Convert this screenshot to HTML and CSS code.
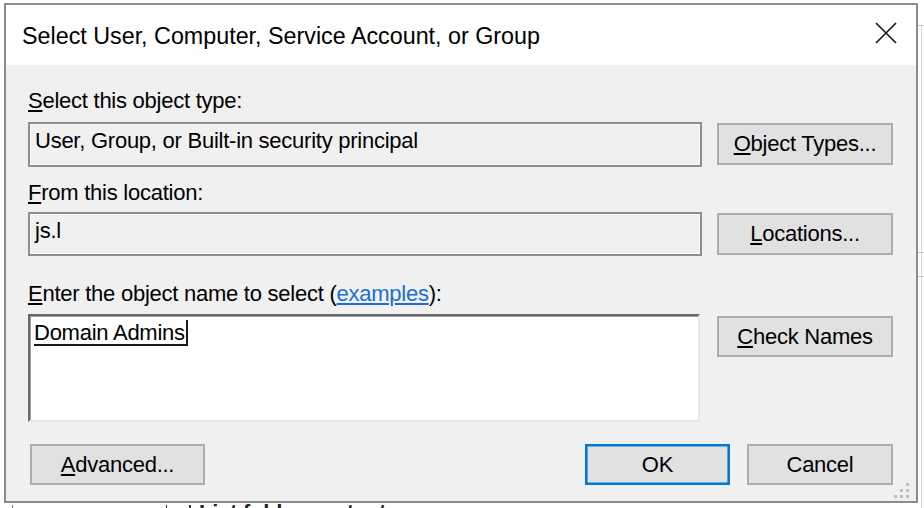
FILE: index.html
```html
<!DOCTYPE html>
<html>
<head>
<meta charset="utf-8">
<link rel="stylesheet" href="styles.css">
</head>
<body>
<div class="backdrop">
  <div class="bd-vline"></div>
  <div class="bd-h1"></div>
  <div class="bd-h2"></div>
  <div class="bd-h3"></div>
  <div class="bd-left"></div>
  <div class="bd-check"></div>
  <div class="bd-text">List folder contents</div>
</div>
<div class="dialog">
  <div class="titlebar">
    <span class="title">Select User, Computer, Service Account, or Group</span>
    <svg class="close" width="22" height="22" viewBox="0 0 22 22"><path d="M1 1 L21 21 M21 1 L1 21" stroke="#1a1a1a" stroke-width="1.7" fill="none"/></svg>
  </div>
  <div class="content">
    <div class="label l1"><u>S</u>elect this object type:</div>
    <div class="row">
      <div class="field f1">User, Group, or Built-in security principal</div>
      <button class="btn b1"><u>O</u>bject Types...</button>
    </div>
    <div class="label l2"><u>F</u>rom this location:</div>
    <div class="row">
      <div class="field f2">js.l</div>
      <button class="btn b2"><u>L</u>ocations...</button>
    </div>
    <div class="label l3"><u>E</u>nter the object name to select (<a class="link" href="#">examples</a>):</div>
    <div class="row">
      <div class="names"><span class="resolved">Domain Admins</span></div>
      <button class="btn b3"><u>C</u>heck Names</button>
    </div>
    <div class="footer">
      <button class="btn adv"><u>A</u>dvanced...</button>
      <div class="spacer"></div>
      <button class="btn ok">OK</button>
      <button class="btn cancel">Cancel</button>
    </div>
  </div>
  <svg class="grip" width="18" height="18" viewBox="0 0 18 18" fill="#bcbcbc">
    <rect x="13" y="1" width="3" height="3"/>
    <rect x="7" y="7" width="3" height="3"/><rect x="13" y="7" width="3" height="3"/>
    <rect x="1" y="13" width="3" height="3"/><rect x="7" y="13" width="3" height="3"/><rect x="13" y="13" width="3" height="3"/>
  </svg>
</div>
</body>
</html>
```
FILE: styles.css
```css
html, body {
  margin: 0;
  padding: 0;
  background: #ffffff;
  overflow: hidden;
  width: 924px;
  height: 508px;
}
body {
  font-family: "Liberation Sans", Arial, sans-serif;
  font-size: 22px;
  letter-spacing: -0.25px;
  color: #000;
  position: relative;
}
.backdrop {
  position: absolute;
  left: 0;
  top: 0;
  width: 924px;
  height: 508px;
}
.bd-vline {
  position: absolute;
  left: 921px;
  top: 25px;
  width: 1px;
  height: 483px;
  background: #d4d4d4;
}
.bd-h1, .bd-h2, .bd-h3 {
  position: absolute;
  left: 918px;
  width: 6px;
  height: 1px;
  background: #c8c8c8;
}
.bd-h1 { top: 25px; }
.bd-h2 { top: 252px; }
.bd-h3 { top: 276px; }
.bd-left {
  position: absolute;
  left: 12px;
  top: 505px;
  width: 1px;
  height: 3px;
  background: #777;
}
.bd-check {
  position: absolute;
  left: 166px;
  top: 505px;
  width: 22px;
  height: 8px;
  border-left: 1px solid #333;
  border-right: 2px solid #333;
}
.bd-text {
  position: absolute;
  left: 199px;
  top: 502px;
  font-size: 22px;
  line-height: 22px;
  font-weight: bold;
  color: #222;
  white-space: nowrap;
}
.dialog {
  position: relative;
  margin: 3px 0 0 4px;
  width: 914px;
  height: 500px;
  box-sizing: border-box;
  border: 2px solid #8c8c8c;
  background: #f0f0f0;
  display: flex;
  flex-direction: column;
}
.titlebar {
  height: 60px;
  box-sizing: border-box;
  background: #fff;
  display: flex;
  align-items: flex-start;
  justify-content: space-between;
  padding: 16px 19px 0 16px;
}
.title {
  font-size: 23.3px;
  letter-spacing: 0;
  line-height: 30px;
  white-space: nowrap;
}
.close {
  margin-top: 1px;
  display: block;
}
.content {
  flex: 1;
  padding: 23px 23px 0 22px;
  display: flex;
  flex-direction: column;
}
.label {
  height: 26px;
  line-height: 26px;
  white-space: nowrap;
}
.l1 { margin-bottom: 8px; }
.l2 { margin-top: 13px; margin-bottom: 6px; }
.l3 { margin-top: 25px; margin-bottom: 7px; }
.link {
  color: #1a6fd0;
  text-decoration: underline;
}
.row {
  display: flex;
  align-items: flex-start;
  gap: 15px;
}
.field {
  width: 674px;
  box-sizing: border-box;
  border: 2px solid #8e8e8e;
  box-shadow: inset 0 0 0 1px #fbfbfb;
  background: #f0f0f0;
  line-height: 26px;
  padding: 4px 5px 0;
  white-space: nowrap;
}
.f1 { height: 45px; }
.f2 { height: 44px; }
.names {
  width: 672px;
  height: 108px;
  box-sizing: border-box;
  background: #fff;
  border-style: solid;
  border-width: 2px;
  border-color: #6a6a6a #e6e6e6 #e6e6e6 #6a6a6a;
  box-shadow: inset 1px 1px 0 #9a9a9a;
  padding: 4px 4px 0 4px;
  line-height: 23px;
}
.resolved {
  display: inline-block;
  height: 23px;
  line-height: 23px;
  padding-top: 1px;
  padding-right: 1px;
  border-bottom: 2px solid #1a1a1a;
  border-right: 2px solid #1a1a1a;
  white-space: nowrap;
}
.btn {
  font-family: inherit;
  font-size: inherit;
  letter-spacing: inherit;
  color: #000;
  background: #e1e1e1;
  border: 2px solid #adadad;
  padding: 0;
  margin: 0;
  box-sizing: border-box;
  line-height: 24px;
  white-space: nowrap;
}
.b1, .b2, .b3 {
  width: 176px;
}
.b1 { height: 42px; margin-top: 1px; }
.b2 { height: 42px; margin-top: 1px; }
.b3 { height: 41px; margin-top: 2px; margin-left: 2px; width: 176px; }
.footer {
  margin-top: 22px;
  display: flex;
  align-items: flex-start;
}
.adv {
  margin-left: 2px;
  width: 175px;
  height: 41px;
}
.spacer { flex: 1; }
.ok {
  width: 145px;
  height: 41px;
  border-color: #0078d7;
  box-shadow: inset 0 0 0 0.6px #0078d7;
}
.cancel {
  margin-left: 17px;
  width: 146px;
  height: 41px;
}
.grip {
  position: absolute;
  right: 5px;
  bottom: 1px;
  display: block;
}
```
